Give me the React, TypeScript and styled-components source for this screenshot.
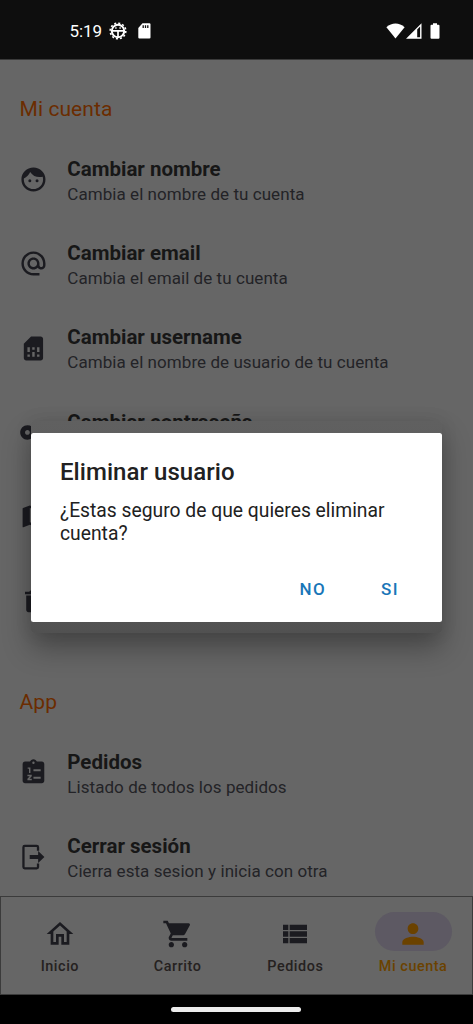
import React from "react";
import styled, { createGlobalStyle } from "styled-components";
import {
  MdFace,
  MdAlternateEmail,
  MdSimCard,
  MdVpnKey,
  MdMap,
  MdDelete,
  MdOutlineHome,
  MdShoppingCart,
  MdViewList,
  MdPerson,
} from "react-icons/md";

const GlobalStyle = createGlobalStyle`
  * { box-sizing: border-box; }
  body { margin: 0; background: #000; font-family: Roboto, sans-serif; }
  svg { display: block; }
`;

const Screen = styled.div`
  position: relative;
  display: flex;
  flex-direction: column;
  width: 473px;
  height: 1024px;
  overflow: hidden;
  background: #000;
`;

const StatusBar = styled.header`
  display: flex;
  flex: none;
  align-items: center;
  justify-content: space-between;
  height: 60px;
  padding: 3px 33.5px 0 69.5px;
  background: #0e0e0e;
  border-bottom: 1px solid #3a3a3a;
  color: #fff;
`;

const StatusGroup = styled.div<{ $gap: number }>`
  display: flex;
  align-items: center;
  gap: ${(p) => p.$gap}px;
`;

const Clock = styled.span`
  width: 33px;
  font-size: 17px;
  line-height: 20px;
  letter-spacing: -0.1px;
`;

const Content = styled.main`
  flex: 1;
  min-height: 0;
  overflow: hidden;
  background: #666;
`;

const SectionTitle = styled.h2<{ $height: number }>`
  display: flex;
  align-items: flex-end;
  height: ${(p) => p.$height}px;
  margin: 0;
  padding: 0 0 16px 19.5px;
  color: #6b2c00;
  font-size: 21px;
  font-weight: 400;
  line-height: 24px;
  letter-spacing: 0.08px;
`;

const Row = styled.div`
  display: flex;
  align-items: center;
  gap: 19px;
  height: 84.4px;
  padding-left: 19.4px;
`;

const RowIcon = styled.span`
  flex: none;
  color: #1b1b20;
  svg { width: 28.9px; height: 28.9px; }
`;

const RowText = styled.div`
  display: flex;
  flex-direction: column;
  padding-top: 3px;
  white-space: nowrap;
`;

const RowTitle = styled.span`
  color: #171717;
  font-size: 20.5px;
  font-weight: 700;
  line-height: 26px;
`;

const RowSubtitle = styled.span`
  color: #232327;
  font-size: 17px;
  line-height: 24px;
  letter-spacing: 0.06px;
`;

const NavBar = styled.nav`
  display: grid;
  grid-template-columns: repeat(4, 1fr);
  flex: none;
  height: 99px;
  border: 1px solid #3b3b3b;
  background: #666;
`;

const NavItem = styled.div<{ $active?: boolean }>`
  display: flex;
  flex-direction: column;
  align-items: center;
  padding-top: 15px;
  color: ${(p) => (p.$active ? "#6b4200" : "#1b1b20")};
`;

const NavPill = styled.span<{ $active?: boolean }>`
  display: flex;
  align-items: center;
  justify-content: center;
  width: 77px;
  height: 39px;
  padding-top: 4px;
  border-radius: 20px;
  background: ${(p) => (p.$active ? "#5d5963" : "transparent")};
  svg { width: 32px; height: 32px; }
`;

const NavLabel = styled.span<{ $active?: boolean }>`
  margin-top: 6px;
  color: ${(p) => (p.$active ? "#6b4200" : "#25211f")};
  font-size: 14.4px;
  font-weight: 500;
  line-height: 20px;
  letter-spacing: 0.55px;
`;

const GestureBar = styled.footer`
  display: flex;
  flex: none;
  justify-content: center;
  height: 29px;
  padding: 12px 1px 0 0;
`;

const GestureHandle = styled.span`
  width: 130px;
  height: 5px;
  border-radius: 3px;
  background: #ececec;
`;

const DialogWindow = styled.div`
  position: absolute;
  top: 421px;
  left: 31px;
  width: 411px;
  height: 212px;
  padding: 12px 0 11px;
  border-radius: 3px;
  background: linear-gradient(#606060, #515151);
  box-shadow: 0 15px 29px rgba(0, 0, 0, 0.32), 0 0 18px rgba(0, 0, 0, 0.08);
`;

const Dialog = styled.section`
  display: flex;
  flex-direction: column;
  height: 189px;
  padding: 24px 29px 0;
  border-radius: 2.5px;
  background: #fff;
`;

const DialogTitle = styled.h1`
  margin: 0;
  color: #212121;
  font-size: 24px;
  font-weight: 500;
  line-height: 30px;
  letter-spacing: 0.05px;
`;

const DialogMessage = styled.p`
  margin: 12px 0 0;
  color: #212121;
  font-size: 19.3px;
  line-height: 23px;
`;

const DialogActions = styled.div`
  display: flex;
  justify-content: flex-end;
  gap: 55px;
  margin-top: 32px;
  padding-right: 14px;
`;

const DialogButton = styled.button`
  padding: 0;
  border: 0;
  background: none;
  color: #1976b8;
  font: 500 17px/24px Roboto, sans-serif;
  letter-spacing: 1.4px;
`;

const DebugIcon = () => (
  <svg width="18" height="18" viewBox="0 0 18 18" fill="none" stroke="#fff">
    <circle cx="9" cy="9" r="6.2" strokeWidth="2" />
    <circle cx="9" cy="9" r="7.8" strokeWidth="1.6" strokeDasharray="2.05 2.034" />
    <path d="M2.7 8.9h12.6M9 8.9v6.5" strokeWidth="1.7" />
    <path d="M6.2 6h1.4M10.4 6h1.4" strokeWidth="1.4" />
  </svg>
);

const SdCardIcon = () => (
  <svg width="13" height="16" viewBox="0 0 13 16">
    <path d="M4.5.3H11.4Q12.5.3 12.5 1.4V14.5Q12.5 15.6 11.4 15.6H1.4Q.3 15.6.3 14.5V5z" fill="#fff" />
    <path d="M5.2 2.2v2.8M7.5 2.2v2.8M9.8 2.2v2.8" stroke="#0e0e0e" strokeWidth="1.3" />
  </svg>
);

const WifiIcon = () => (
  <svg width="19" height="16" viewBox="0 0 19 16">
    <path d="M.4 4.2C5.8-.7 13.2-.7 18.6 4.2L9.5 15.6z" fill="#fff" />
  </svg>
);

const SignalIcon = () => (
  <svg width="16" height="16" viewBox="0 0 16 16">
    <path d="M0 15.7 15.5.2v15.5zM11.2 6.4v7.8h2.9V3.5z" fill="#fff" fillRule="evenodd" />
  </svg>
);

const BatteryIcon = () => (
  <svg width="10" height="16" viewBox="0 0 10 16">
    <path d="M3 .2h4v1.6h1.5q1 0 1 1v12q0 1-1 1h-7q-1 0-1-1v-12q0-1 1-1H3z" fill="#fff" />
  </svg>
);

const NumberedClipboardIcon = () => (
  <svg viewBox="0 0 24 24" fill="none">
    <path
      fill="currentColor"
      fillRule="evenodd"
      d="M19 3h-4.18C14.4 1.84 13.3 1 12 1s-2.4.84-2.82 2H5c-1.1 0-2 .9-2 2v14c0 1.1.9 2 2 2h14c1.1 0 2-.9 2-2V5c0-1.1-.9-2-2-2zm-7 0a1 1 0 1 1 0 2 1 1 0 0 1 0-2zM7.2 7.8h2.3v4.7H8.3V9H7.2zM12 9.3h6v1.7h-6zM12 15.5h6v1.7h-6zM7 14h3.6v1.2l-1.9 2.1h1.9v1.2H7v-1.2l1.9-2.1H7z"
    />
  </svg>
);

const ExitIcon = () => (
  <svg viewBox="0 0 24 24" fill="none">
    <path
      d="M15.8 7.3V4.3q0-1.1-1.1-1.1H4.8q-1.1 0-1.1 1.1v16.5q0 1.1 1.1 1.1h9.9q1.1 0 1.1-1.1v-3"
      stroke="currentColor"
      strokeWidth="1.9"
    />
    <path d="M8.9 10.8h7V7.5l5.2 5-5.2 5v-3.3h-7z" fill="currentColor" />
  </svg>
);

const accountRows = [
  { icon: <MdFace />, title: "Cambiar nombre", text: "Cambia el nombre de tu cuenta" },
  { icon: <MdAlternateEmail />, title: "Cambiar email", text: "Cambia el email de tu cuenta" },
  { icon: <MdSimCard />, title: "Cambiar username", text: "Cambia el nombre de usuario de tu cuenta" },
  { icon: <MdVpnKey />, title: "Cambiar contraseña", text: "" },
  { icon: <MdMap />, title: "", text: "" },
  { icon: <MdDelete />, title: "", text: "" },
];

const appRows = [
  { icon: <NumberedClipboardIcon />, title: "Pedidos", text: "Listado de todos los pedidos" },
  { icon: <ExitIcon />, title: "Cerrar sesión", text: "Cierra esta sesion y inicia con otra" },
];

const navItems = [
  { icon: <MdOutlineHome />, label: "Inicio" },
  { icon: <MdShoppingCart />, label: "Carrito" },
  { icon: <MdViewList />, label: "Pedidos" },
  { icon: <MdPerson />, label: "Mi cuenta", active: true },
];

type SettingProps = { icon: React.ReactNode; title: string; text: string };

const Setting = ({ icon, title, text }: SettingProps) => (
  <Row>
    <RowIcon>{icon}</RowIcon>
    {title && (
      <RowText>
        <RowTitle>{title}</RowTitle>
        <RowSubtitle>{text || "\u00a0"}</RowSubtitle>
      </RowText>
    )}
  </Row>
);

export default function App() {
  return (
    <>
      <GlobalStyle />
      <Screen>
        <StatusBar>
          <StatusGroup $gap={6.5}>
            <Clock>5:19</Clock>
            <StatusGroup $gap={11}>
              <DebugIcon />
              <SdCardIcon />
            </StatusGroup>
          </StatusGroup>
          <StatusGroup $gap={8}>
            <StatusGroup $gap={1}>
              <WifiIcon />
              <SignalIcon />
            </StatusGroup>
            <BatteryIcon />
          </StatusGroup>
        </StatusBar>
        <Content>
          <SectionTitle $height={77}>Mi cuenta</SectionTitle>
          {accountRows.map((row, i) => (
            <Setting key={i} {...row} />
          ))}
          <SectionTitle $height={86.9}>App</SectionTitle>
          {appRows.map((row, i) => (
            <Setting key={i} {...row} />
          ))}
        </Content>
        <NavBar>
          {navItems.map(({ icon, label, active }) => (
            <NavItem key={label} $active={active}>
              <NavPill $active={active}>{icon}</NavPill>
              <NavLabel $active={active}>{label}</NavLabel>
            </NavItem>
          ))}
        </NavBar>
        <GestureBar>
          <GestureHandle />
        </GestureBar>
        <DialogWindow>
          <Dialog role="dialog">
            <DialogTitle>Eliminar usuario</DialogTitle>
            <DialogMessage>¿Estas seguro de que quieres eliminar cuenta?</DialogMessage>
            <DialogActions>
              <DialogButton>NO</DialogButton>
              <DialogButton>SI</DialogButton>
            </DialogActions>
          </Dialog>
        </DialogWindow>
      </Screen>
    </>
  );
}
